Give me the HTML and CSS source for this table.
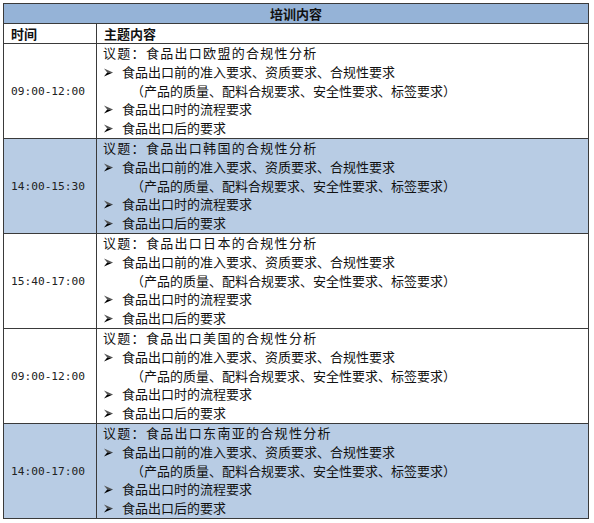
FILE: index.html
```html
<!DOCTYPE html>
<html lang="zh">
<head>
<meta charset="utf-8">
<link rel="stylesheet" href="styles.css">
</head>
<body>
<svg class="defs" width="0" height="0" aria-hidden="true">
  <defs>
    <g id="arrow">
      <polygon points="0,0.5 9,4.5 3.2,4.5" fill="#555"/>
      <polygon points="3.2,4.5 9,4.5 0,8.5" fill="#000"/>
    </g>
  </defs>
</svg>
<table class="sched">
  <colgroup><col class="c-time"><col class="c-topic"></colgroup>
  <tr class="title-row"><th colspan="2">培训内容</th></tr>
  <tr class="head-row"><th class="h-time">时间</th><th class="h-topic">主题内容</th></tr>
  <tr class="row">
    <td class="time">09:00-12:00</td>
    <td class="topic">
      <div class="subject">议题：食品出口欧盟的合规性分析</div>
      <div class="item"><svg class="bullet" viewBox="0 0 9 9"><use href="#arrow"/></svg>食品出口前的准入要求、资质要求、合规性要求</div>
      <div class="note">（产品的质量、配料合规要求、安全性要求、标签要求）</div>
      <div class="item"><svg class="bullet" viewBox="0 0 9 9"><use href="#arrow"/></svg>食品出口时的流程要求</div>
      <div class="item"><svg class="bullet" viewBox="0 0 9 9"><use href="#arrow"/></svg>食品出口后的要求</div>
    </td>
  </tr>
  <tr class="row shaded">
    <td class="time">14:00-15:30</td>
    <td class="topic">
      <div class="subject">议题：食品出口韩国的合规性分析</div>
      <div class="item"><svg class="bullet" viewBox="0 0 9 9"><use href="#arrow"/></svg>食品出口前的准入要求、资质要求、合规性要求</div>
      <div class="note">（产品的质量、配料合规要求、安全性要求、标签要求）</div>
      <div class="item"><svg class="bullet" viewBox="0 0 9 9"><use href="#arrow"/></svg>食品出口时的流程要求</div>
      <div class="item"><svg class="bullet" viewBox="0 0 9 9"><use href="#arrow"/></svg>食品出口后的要求</div>
    </td>
  </tr>
  <tr class="row">
    <td class="time">15:40-17:00</td>
    <td class="topic">
      <div class="subject">议题：食品出口日本的合规性分析</div>
      <div class="item"><svg class="bullet" viewBox="0 0 9 9"><use href="#arrow"/></svg>食品出口前的准入要求、资质要求、合规性要求</div>
      <div class="note">（产品的质量、配料合规要求、安全性要求、标签要求）</div>
      <div class="item"><svg class="bullet" viewBox="0 0 9 9"><use href="#arrow"/></svg>食品出口时的流程要求</div>
      <div class="item"><svg class="bullet" viewBox="0 0 9 9"><use href="#arrow"/></svg>食品出口后的要求</div>
    </td>
  </tr>
  <tr class="row">
    <td class="time">09:00-12:00</td>
    <td class="topic">
      <div class="subject">议题：食品出口美国的合规性分析</div>
      <div class="item"><svg class="bullet" viewBox="0 0 9 9"><use href="#arrow"/></svg>食品出口前的准入要求、资质要求、合规性要求</div>
      <div class="note">（产品的质量、配料合规要求、安全性要求、标签要求）</div>
      <div class="item"><svg class="bullet" viewBox="0 0 9 9"><use href="#arrow"/></svg>食品出口时的流程要求</div>
      <div class="item"><svg class="bullet" viewBox="0 0 9 9"><use href="#arrow"/></svg>食品出口后的要求</div>
    </td>
  </tr>
  <tr class="row shaded">
    <td class="time">14:00-17:00</td>
    <td class="topic">
      <div class="subject">议题：食品出口东南亚的合规性分析</div>
      <div class="item"><svg class="bullet" viewBox="0 0 9 9"><use href="#arrow"/></svg>食品出口前的准入要求、资质要求、合规性要求</div>
      <div class="note">（产品的质量、配料合规要求、安全性要求、标签要求）</div>
      <div class="item"><svg class="bullet" viewBox="0 0 9 9"><use href="#arrow"/></svg>食品出口时的流程要求</div>
      <div class="item"><svg class="bullet" viewBox="0 0 9 9"><use href="#arrow"/></svg>食品出口后的要求</div>
    </td>
  </tr>
</table>
</body>
</html>
```
FILE: styles.css
```css
html, body {
  margin: 0;
  padding: 0;
  background: #ffffff;
}
body {
  padding: 3px 0 0 3px;
  font-family: "Noto Sans CJK SC", "Noto Sans", sans-serif;
  font-size: 13px;
  color: #111;
}
.defs {
  position: absolute;
  width: 0;
  height: 0;
}
.sched {
  border-collapse: collapse;
  width: 586px;
  table-layout: fixed;
}
.c-time { width: 93px; }
.sched th, .sched td {
  border: 1px solid #3a3a3a;
  padding: 0;
  vertical-align: middle;
}
.title-row th {
  background: #95b3d7;
  height: 19px;
  line-height: 19px;
  font-weight: bold;
  text-align: center;
  font-size: 13px;
}
.head-row th {
  height: 19px;
  line-height: 19px;
  font-weight: bold;
  text-align: left;
  font-size: 13px;
}
.h-time { padding-left: 7px !important; }
.h-topic { padding-left: 7px !important; }
.row td { height: 94px; }
.shaded td { background: #b8cce4; }
.time {
  font-family: "DejaVu Sans Mono", monospace;
  font-size: 11.2px;
  text-align: center;
  padding-right: 4px !important;
  color: #222;
}
.topic {
  padding-left: 6px !important;
  line-height: 18.8px;
  white-space: nowrap;
}
.subject { letter-spacing: 1.3px; }
.item {
  display: flex;
  align-items: center;
}
.bullet {
  width: 9px;
  height: 9px;
  flex: none;
  margin-left: 1px;
  margin-right: 9px;
}
.note { padding-left: 28px; }
```
